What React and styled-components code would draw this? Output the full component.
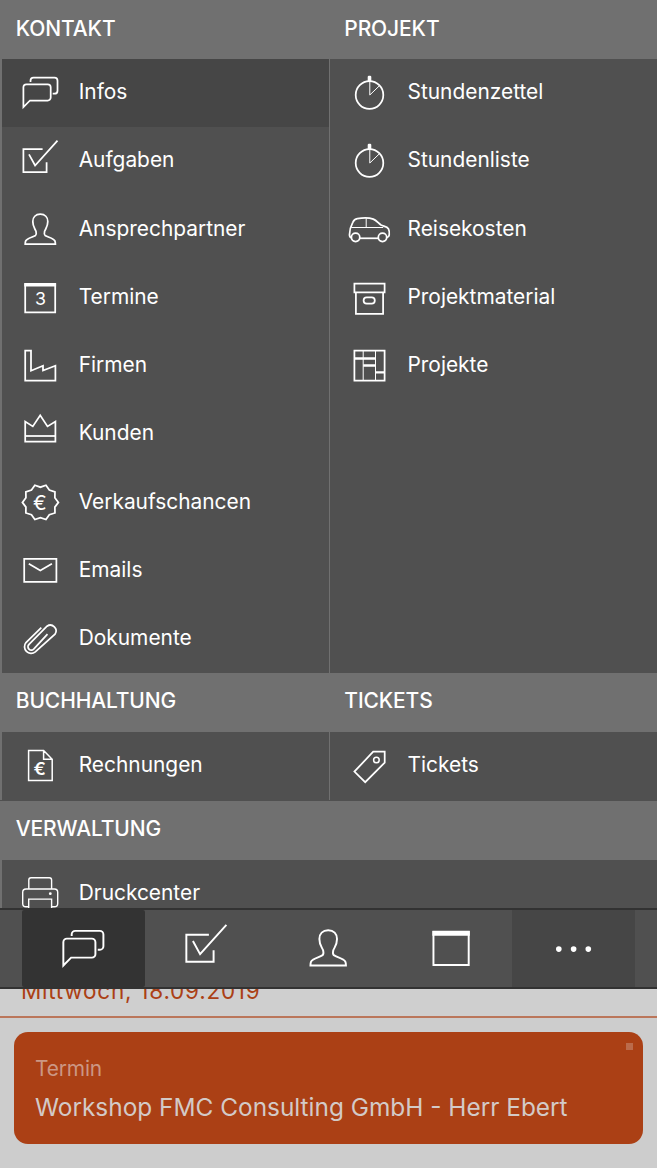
import React from "react";
import styled, { createGlobalStyle } from "styled-components";

const GlobalStyle = createGlobalStyle`
  * { box-sizing: border-box; }
  body { margin: 0; background: #cdcdcd; font-family: Inter, "Liberation Sans", sans-serif; }
`;

const Screen = styled.main`
  width: 657px;
  height: 1168px;
  display: flex;
  flex-direction: column;
  overflow: hidden;
`;

const Menu = styled.section`
  flex: 0 0 908px;
  overflow: hidden;
  background: #505050;
`;

const HeaderRow = styled.div`
  display: grid;
  grid-template-columns: 328.5px 1fr;
  height: ${(p) => (p.$first ? 59 : 58.8)}px;
  line-height: ${(p) => (p.$first ? 58 : 56)}px;
  background: #707070;
`;

const Heading = styled.h2`
  margin: 0;
  padding-left: 15.8px;
  font-size: 21px;
  font-weight: 500;
  letter-spacing: -0.13px;
  color: #fff;
`;

const Columns = styled.div`
  display: grid;
  grid-template-columns: 329px 1fr;
  padding-bottom: ${(p) => p.$gap || 0}px;
`;

const Column = styled.div`
  border-left: ${(p) => (p.$first ? 2 : 1)}px solid #707070;
`;

const Item = styled.div`
  display: flex;
  align-items: center;
  height: 68.25px;
  padding-left: ${(p) => (p.$first ? 15.7 : 16.5)}px;
  background: ${(p) => (p.$active ? "#464646" : "transparent")};
`;

const Label = styled.span`
  margin: -2px 0 0 17px;
  font-size: 20.9px;
  line-height: 28px;
  font-weight: 400;
  color: #fff;
`;

const Svg = styled.svg`
  display: block;
  flex: none;
  width: ${(p) => p.$size}px;
  height: ${(p) => p.$size}px;
  overflow: visible;
  fill: none;
  stroke: #fff;
  stroke-width: ${(p) => p.$stroke};

  .thin { stroke-width: 1; }
  .solid { fill: #fff; stroke: none; }
  text {
    fill: #fff;
    stroke: none;
    text-anchor: middle;
    font-family: Inter, sans-serif;
  }
`;

const NavBar = styled.nav`
  flex: 0 0 81px;
  display: grid;
  grid-template-columns: repeat(5, 1fr);
  padding: 0 22px;
  background: #505050;
  border-top: 2px solid #323232;
  border-bottom: 2px solid #323232;
`;

const tones = { active: "#333333", more: "#464646" };

const NavItem = styled.div`
  display: flex;
  align-items: center;
  justify-content: center;
  padding-right: 0.6px;
  background: ${(p) => tones[p.$tone] || "transparent"};
  border-radius: ${(p) => (p.$tone === "active" ? 2 : 0)}px;
`;

const Feed = styled.section`
  flex: 1;
  overflow: hidden;
  background: #cdcdcd;
`;

const DateLine = styled.div`
  height: 29px;
  display: flex;
  align-items: flex-end;
  overflow: hidden;
  padding: 0 0 11px 21px;
  background: #cfcfcf;
  border-bottom: 2px solid #bb765b;
  font-size: 22.5px;
  line-height: 28px;
  letter-spacing: 0.76px;
  color: #ab4015;
`;

const Card = styled.article`
  display: flex;
  justify-content: space-between;
  height: 112px;
  margin: 14px 14px 0;
  padding: 11px 10px 0 21px;
  border-radius: 14px;
  background: #ab4015;
`;

const CardText = styled.div`
  padding-top: 12px;
`;

const Kind = styled.div`
  font-size: 20.9px;
  line-height: 28px;
  font-weight: 400;
  letter-spacing: -0.15px;
  color: #cb9784;
`;

const Title = styled.div`
  margin-top: 7px;
  font-size: 24.4px;
  line-height: 34px;
  font-weight: 400;
  white-space: nowrap;
  color: #d3cac7;
`;

const Marker = styled.span`
  width: 7px;
  height: 7px;
  background: #bb6b4b;
`;

const badge = Array.from({ length: 20 }, (_, i) => {
  const r = i % 2 ? 15.2 : 18;
  const a = (i * Math.PI) / 10;
  return `${(22.4 + r * Math.cos(a)).toFixed(2)},${(21.4 + r * Math.sin(a)).toFixed(2)}`;
}).join(" ");

const glyphs = {
  chat: (
    <>
      <path d="M5.4 36.2V16.3a3 3 0 0 1 3-3h21.3a3 3 0 0 1 3 3v10.2a3 3 0 0 1-3 3H12z" />
      <path d="M12.5 11V9.7a3 3 0 0 1 3-3h21a3 3 0 0 1 3 3v10a3 3 0 0 1-3 3h-1.8" />
    </>
  ),
  check: (
    <>
      <path d="M24.6 10H5.4v23h23.2v-9.8" />
      <path d="M11 15.3l6.1 11.2L39.5 1.6" />
    </>
  ),
  person: (
    <path d="M22.3 6.2C17.6 6.2 14.8 9.2 14.8 13.6C14.8 19 17 20.5 18 23.3C18.4 25 18.6 26.4 17.5 27.4C14.7 29.2 9.2 30.2 7.8 32.7C7.2 34 7.2 35.2 7.2 36.2H37.4C37.4 35.2 37.4 34 36.8 32.7C35.4 30.2 29.9 29.2 27.1 27.4C26 26.4 26.2 25 26.6 23.3C27.6 20.5 29.8 19 29.8 13.6C29.8 9.2 27 6.2 22.3 6.2Z" />
  ),
  calendar: (
    <>
      <path d="M7.2 7.6h30v28.2h-30z" />
      <path className="solid" d="M6.3 6.7h31.8v4.1H6.3z" />
    </>
  ),
  date: (
    <>
      <path d="M7.2 8h30v28.3h-30z" />
      <path className="solid" d="M6.3 7.1h31.8v3.4H6.3z" />
      <text x="22.4" y="29.2" fontSize="17.8">3</text>
    </>
  ),
  factory: <path d="M7.2 36.7V6.5h5.8v20.3l12-5.1v4.8l12.4-4.8v15z" />,
  crown: (
    <>
      <path d="M7.2 29.6V9.6l7.6 4.8L22.2 3.3l7.3 11.1 7.9-4.8v20z" />
      <path d="M7.2 24h30.2" />
    </>
  ),
  badge: (
    <>
      <polygon points={badge} />
      <text x="21.8" y="28.8" fontSize="20.5">€</text>
    </>
  ),
  mail: (
    <>
      <path d="M6.2 9.9h32.2v22.9H6.2z" />
      <path d="M10.8 14.7l11.5 6.7 11.6-6.7" />
    </>
  ),
  clip: (
    <path d="M23.3 10.6L8 25.5a6.65 6.65 0 0 0 9.3 9.4L37 17.2a5.75 5.75 0 0 0-8-8L11 27.3a3.35 3.35 0 0 0 4.7 4.8L29.5 17.2" />
  ),
  watch: (
    <>
      <circle cx="22.5" cy="24" r="13.8" />
      <rect className="solid" x="20.7" y="4.8" width="3.6" height="6.2" rx="1.2" />
      <path className="thin" d="M22.8 10v14l9.8-9.4" />
    </>
  ),
  car: (
    <>
      <path d="M4.4 29.6C2.8 29.4 2.4 28.6 2.5 26.5C2.5 21 4 17.6 5.8 14.3C6.8 12.2 7.8 11.1 10.3 10.7C15 9.9 22 9.7 26.3 11.1C29.3 12.4 31 14.7 34 17C37 18.4 40 18.4 41.4 20.7C42.5 22.8 42.4 25.4 42.2 27.2C42 28.8 41.2 29.4 39.8 29.6" />
      <path d="M12.8 30.3h18.4" />
      <circle cx="8.6" cy="29.3" r="4.2" />
      <circle cx="35.5" cy="29.3" r="4.2" />
      <path className="thin" d="M4.2 19.5h32M19.2 10.2v9.3" />
    </>
  ),
  box: (
    <>
      <path d="M7.4 7.7h30.2v8.6H7.4zM8.9 16.3v21.6h27.2V16.3" />
      <rect x="16.6" y="21.3" width="11.2" height="6.2" rx="3.1" />
    </>
  ),
  plan: (
    <>
      <path d="M7.4 6.6h30.2v30H7.4z" />
      <path className="thin" d="M16.2 6.6v30M28.5 6.6v30" />
      <path strokeWidth="2.4" d="M7.4 14.5h21.1M16.2 21.5h12.3M28.5 28.4h9" />
    </>
  ),
  invoice: (
    <>
      <path strokeWidth="1.5" d="M10.6 6.5h15l8.6 8.8v21.3H10.6zM25.6 6.5v8.8h8.6" />
      <text x="21.8" y="30.9" fontSize="17" fontWeight="600" textLength="12.4" lengthAdjust="spacingAndGlyphs">€</text>
    </>
  ),
  tag: (
    <>
      <path d="M26.2 7.7h11.5v11L18.2 38.2 7.4 27.6z" />
      <circle cx="29.4" cy="16" r="2.8" strokeWidth="1.5" />
    </>
  ),
  printer: (
    <>
      <path strokeWidth="1.4" d="M10.8 17V8a2.2 2.2 0 0 1 2.2-2.2h18.4A2.2 2.2 0 0 1 33.6 8v9" />
      <path strokeWidth="1.4" d="M10.6 34.8H8a3.3 3.3 0 0 1-3.3-3.3V20.3A3.3 3.3 0 0 1 8 17h28.4a3.3 3.3 0 0 1 3.3 3.3v11.2a3.3 3.3 0 0 1-3.3 3.3h-2.8" />
      <path strokeWidth="1.4" d="M10.7 40V27.1h22.9V40" />
      <circle className="solid" cx="32.3" cy="21.7" r="1.4" />
    </>
  ),
  more: (
    <>
      <circle className="solid" cx="9.2" cy="22.2" r="2.4" />
      <circle className="solid" cx="21.8" cy="22.2" r="2.4" />
      <circle className="solid" cx="34.3" cy="22.2" r="2.4" />
    </>
  ),
};

function Icon({ name, size = 44, stroke = 1.75 }) {
  return (
    <Svg viewBox="0 0 44 44" $size={size} $stroke={stroke} aria-hidden="true">
      {glyphs[name]}
    </Svg>
  );
}

function MenuColumn({ items, first }) {
  return (
    <Column $first={first}>
      {items.map(([icon, label, active]) => (
        <Item key={label} $first={first} $active={active}>
          <Icon name={icon} />
          <Label>{label}</Label>
        </Item>
      ))}
    </Column>
  );
}

const sections = [
  {
    titles: ["KONTAKT", "PROJEKT"],
    left: [
      ["chat", "Infos", true],
      ["check", "Aufgaben"],
      ["person", "Ansprechpartner"],
      ["date", "Termine"],
      ["factory", "Firmen"],
      ["crown", "Kunden"],
      ["badge", "Verkaufschancen"],
      ["mail", "Emails"],
      ["clip", "Dokumente"],
    ],
    right: [
      ["watch", "Stundenzettel"],
      ["watch", "Stundenliste"],
      ["car", "Reisekosten"],
      ["box", "Projektmaterial"],
      ["plan", "Projekte"],
    ],
  },
  {
    titles: ["BUCHHALTUNG", "TICKETS"],
    left: [["invoice", "Rechnungen"]],
    right: [["tag", "Tickets"]],
    gap: 0.7,
  },
  { titles: ["VERWALTUNG"], left: [["printer", "Druckcenter"]] },
];

const navItems = [["chat", "active"], ["check"], ["person"], ["calendar"], ["more", "more"]];

export default function App() {
  return (
    <>
      <GlobalStyle />
      <Screen>
        <Menu>
          {sections.map((s, i) => (
            <React.Fragment key={s.titles[0]}>
              <HeaderRow $first={i === 0}>
                {s.titles.map((t) => <Heading key={t}>{t}</Heading>)}
              </HeaderRow>
              <Columns $gap={s.gap}>
                <MenuColumn items={s.left} first />
                {s.right && <MenuColumn items={s.right} />}
              </Columns>
            </React.Fragment>
          ))}
        </Menu>
        <NavBar>
          {navItems.map(([icon, tone]) => (
            <NavItem key={icon} $tone={tone}>
              <Icon name={icon} size={51.7} stroke={1.65} />
            </NavItem>
          ))}
        </NavBar>
        <Feed>
          <DateLine>Mittwoch, 18.09.2019</DateLine>
          <Card>
            <CardText>
              <Kind>Termin</Kind>
              <Title>Workshop FMC Consulting GmbH - Herr Ebert</Title>
            </CardText>
            <Marker />
          </Card>
        </Feed>
      </Screen>
    </>
  );
}
